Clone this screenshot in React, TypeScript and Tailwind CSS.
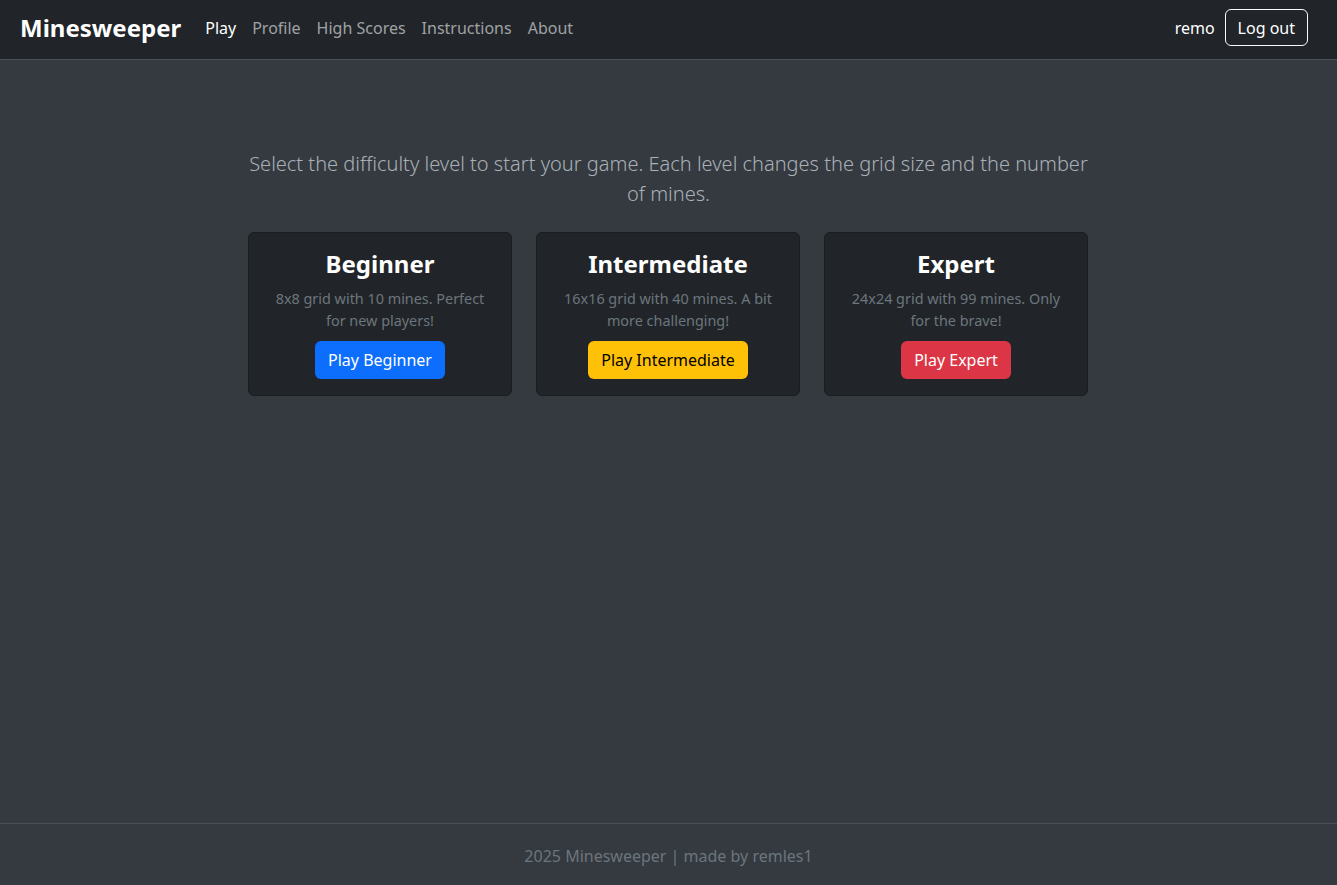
import React from "react";

const font = { fontFamily: '"Noto Sans", "Liberation Sans", sans-serif' };

function LevelCard({ title, desc, btn, btnCls }: { title: string; desc: React.ReactNode; btn: string; btnCls: string }) {
  return (
    <div className="w-[264px] h-[164px] bg-[#212529] border border-[#1b1e21] rounded-[6px] px-4 pt-4 pb-4 flex flex-col items-center text-center">
      <h3 className="text-[24px] leading-[29px] font-bold text-white">{title}</h3>
      <p className="mt-[10px] text-[14.4px] leading-[22px] text-[#6c757d] px-2">{desc}</p>
      <button className={`mt-[9px] h-[38px] px-[13px] rounded-[6px] text-[16px] leading-[24px] ${btnCls}`}>{btn}</button>
    </div>
  );
}

export default function App() {
  return (
    <div className="min-h-screen flex flex-col bg-[#343a40]" style={font}>
      <nav className="h-[60px] bg-[#212529] border-b border-[#4a4f55] flex items-center pl-[20px] pr-[29px] pb-[4px]">
        <span className="text-[24px] font-bold text-white leading-[36px] mr-4">Minesweeper</span>
        <div className="flex items-center text-[16px] leading-[24px]">
          <a className="px-2 text-white">Play</a>
          <a className="px-2 text-[#a0a2a5]">Profile</a>
          <a className="px-2 text-[#a0a2a5]">High Scores</a>
          <a className="px-2 text-[#a0a2a5]">Instructions</a>
          <a className="px-2 text-[#a0a2a5]">About</a>
        </div>
        <div className="ml-auto flex items-center gap-[10px]">
          <span className="text-white text-[16px]">remo</span>
          <button className="h-[37px] px-3 border border-[#f8f9fa] rounded-[6px] text-white text-[16px] leading-[24px]">Log out</button>
        </div>
      </nav>
      <main className="flex-1 pt-[89px]">
        <div className="w-[841px] mx-auto">
          <p className="text-center text-[20px] leading-[30px] font-light text-[#aab0b7]">
            Select the difficulty level to start your game. Each level changes the grid size and the number of mines.
          </p>
          <div className="mt-[23px] flex gap-6">
            <LevelCard
              title="Beginner"
              desc={<>8x8 grid with 10 mines. Perfect for new players!</>}
              btn="Play Beginner"
              btnCls="bg-[#0d6efd] text-white"
            />
            <LevelCard
              title="Intermediate"
              desc={<>16x16 grid with 40 mines. A bit more challenging!</>}
              btn="Play Intermediate"
              btnCls="bg-[#ffc107] text-black"
            />
            <LevelCard
              title="Expert"
              desc={<>24x24 grid with 99 mines. Only for the brave!</>}
              btn="Play Expert"
              btnCls="bg-[#dc3545] text-white"
            />
          </div>
        </div>
      </main>
      <footer className="h-[62px] border-t border-[#4a4f55] pt-[20px] text-center text-[16px] leading-[24px] text-[#6c757d]">
        2025 Minesweeper | made by remles1
      </footer>
    </div>
  );
}
